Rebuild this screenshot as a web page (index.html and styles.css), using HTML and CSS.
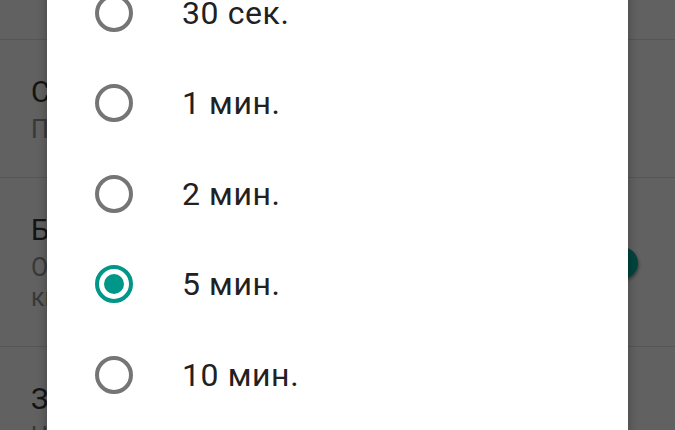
FILE: index.html
```html
<!DOCTYPE html>
<html lang="ru">
<head>
<meta charset="utf-8">
<title>Спящий режим</title>
<link rel="stylesheet" href="styles.css">
</head>
<body>
<div class="settings">
  <div class="item item-first"></div>
  <div class="item">
    <div class="text">
      <div class="title">Спящий режим</div>
      <div class="summary">После 5 минут бездействия</div>
    </div>
  </div>
  <div class="item item-tall">
    <div class="text">
      <div class="title">Быстрый запуск камеры</div>
      <div class="summary">Открывать камеру двойным нажатием</div>
      <div class="summary">кнопки питания</div>
    </div>
    <div class="switch"><div class="thumb"></div></div>
  </div>
  <div class="item">
    <div class="text">
      <div class="title">Заставка</div>
      <div class="summary">Часы</div>
    </div>
  </div>
</div>

<div class="dialog">
  <div class="option">
    <svg class="radio" viewBox="0 0 38 38"><circle cx="19" cy="19" r="17" class="ring"/></svg>
    <span class="label">30 сек.</span>
  </div>
  <div class="option">
    <svg class="radio" viewBox="0 0 38 38"><circle cx="19" cy="19" r="17" class="ring"/></svg>
    <span class="label">1 мин.</span>
  </div>
  <div class="option">
    <svg class="radio" viewBox="0 0 38 38"><circle cx="19" cy="19" r="17" class="ring"/></svg>
    <span class="label">2 мин.</span>
  </div>
  <div class="option checked">
    <svg class="radio" viewBox="0 0 38 38"><circle cx="19" cy="19" r="17" class="ring"/><circle cx="19" cy="19" r="10" class="dot"/></svg>
    <span class="label">5 мин.</span>
  </div>
  <div class="option">
    <svg class="radio" viewBox="0 0 38 38"><circle cx="19" cy="19" r="17" class="ring"/></svg>
    <span class="label">10 мин.</span>
  </div>
</div>
</body>
</html>
```

FILE: styles.css
```css
html, body {
  margin: 0;
  padding: 0;
}
body {
  width: 675px;
  height: 430px;
  overflow: hidden;
  position: relative;
  background: #616161;
  font-family: Roboto, "Noto Sans", sans-serif;
}
.settings {
  display: flex;
  flex-direction: column;
}
.item {
  display: flex;
  align-items: center;
  border-bottom: 1px solid #565656;
  padding: 34px 0 32px 31px;
  overflow: hidden;
}
.item-tall {
  padding-bottom: 33px;
}
.item-first {
  height: 40px;
  padding: 0;
  box-sizing: border-box;
}
.text {
  flex: 1;
  min-width: 0;
  white-space: nowrap;
  overflow: hidden;
}
.title {
  font-size: 29px;
  line-height: 36px;
  color: #141414;
}
.summary {
  font-size: 25px;
  line-height: 30px;
  color: #383838;
}
.title + .summary {
  margin-top: 5px;
}
.switch {
  width: 60px;
  height: 32px;
  margin-right: 37px;
  display: flex;
  justify-content: flex-end;
  align-items: center;
  flex-shrink: 0;
}
.thumb {
  width: 32px;
  height: 32px;
  border-radius: 50%;
  background: #00443c;
  box-shadow: 1px 2px 3px rgba(0, 0, 0, 0.35);
}
.dialog {
  position: absolute;
  left: 47px;
  top: -32.5px;
  width: 581px;
  height: 480px;
  background: #ffffff;
  box-shadow: 0 0 10px rgba(0, 0, 0, 0.3);
  display: flex;
  flex-direction: column;
}
.option {
  height: 90.5px;
  display: flex;
  align-items: center;
  padding-left: 48px;
  flex-shrink: 0;
}
.radio {
  width: 38px;
  height: 38px;
  flex-shrink: 0;
}
.ring {
  fill: none;
  stroke: #757575;
  stroke-width: 4;
}
.checked .ring {
  stroke: #009688;
}
.dot {
  fill: #009688;
}
.label {
  margin-left: 49px;
  font-size: 32px;
  line-height: 38px;
  letter-spacing: 0.6px;
  color: #212121;
}
```
